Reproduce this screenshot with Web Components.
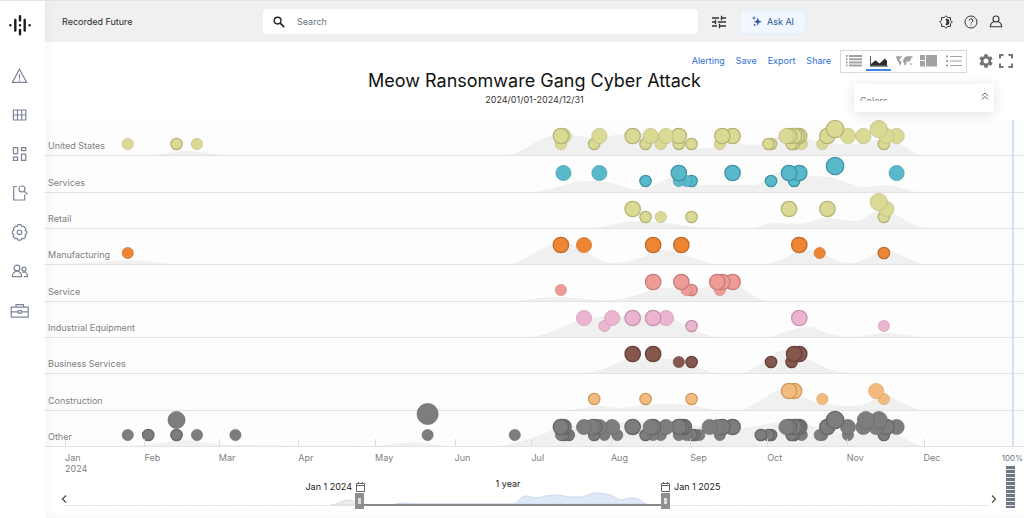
<!DOCTYPE html>
<html lang="en">
<head>
<meta charset="utf-8">
<meta name="viewport" content="width=device-width, initial-scale=1">
<title>Recorded Future – Timeline</title>
<style>
  body { margin: 0; background: #fff; font: 9px/12px Inter, "Liberation Sans", sans-serif; color: #222; }
</style>
</head>
<body>
<app-shell>
  <side-nav slot="nav"></side-nav>
  <top-bar slot="header" brand="Recorded Future"></top-bar>
  <chart-heading heading="Meow Ransomware Gang Cyber Attack" range="2024/01/01-2024/12/31">
    <view-toolbar slot="tools"></view-toolbar>
    <colors-panel slot="panel">Colors</colors-panel>
  </chart-heading>
  <event-timeline></event-timeline>
  <range-footer></range-footer>
</app-shell>

<script>
const define = (name, html, setup) => {
  const tpl = document.createElement('template');
  tpl.innerHTML = html;
  customElements.define(name, class extends HTMLElement {
    constructor() {
      super();
      this.attachShadow({ mode: 'open' }).append(tpl.content.cloneNode(true));
    }
    connectedCallback() { if (setup) setup(this, this.shadowRoot); }
  });
};

/* ---------- shell ---------- */
define('app-shell', `
<style>
  :host { display: grid; grid-template-columns: 45px minmax(0, 1fr); min-height: 100vh; }
  .nav { position: relative; z-index: 2; background: #fff; box-shadow: 0 0 16px rgba(0,0,0,.05); }
  .main { display: flex; flex-direction: column; min-width: 0; }
</style>
<div class="nav"><slot name="nav"></slot></div>
<div class="main"><slot name="header"></slot><slot></slot></div>`);

/* ---------- side navigation ---------- */
define('side-nav', `
<style>
  :host { display: block; border-top: 1px solid #e4e4ec; }
  nav { display: flex; flex-direction: column; }
  a { display: flex; align-items: center; height: 39px; padding-left: 10px; color: #7d8498; }
  a.logo { height: 48px; margin-bottom: 7px; padding-left: 8px; color: #1c1c1e; }
  svg { fill: none; stroke: currentColor; stroke-width: 1.2; }
  .logo svg { stroke-width: 2.4; stroke-linecap: round; }
</style>
<nav aria-label="Main">
  <a class="logo" href="#" aria-label="Home"><svg width="24" height="24" viewBox="0 0 24 24"><path d="M2.300 12.300h.1M21.600 12.300h.1M7.300 6.900v10.600M16.700 6.900v10.600M12 3.200v4.200M12 12.300h.1M12 17v4.200"/></svg></a>
  <a href="#" aria-label="Alerts"><svg width="19" height="18" viewBox="0 0 19 18"><path d="M9.500 2.200 16.700 15.400H2.300zM9.500 7v4.500M9.500 12.600v1.200"/></svg></a>
  <a href="#" aria-label="Tables"><svg width="19" height="18" viewBox="0 0 19 18"><path d="M3.400 4h12.400v10H3.400zM3.400 9h12.400M7.500 4v10M11.700 4v10"/></svg></a>
  <a href="#" aria-label="Dashboards"><svg width="19" height="18" viewBox="0 0 19 18"><path d="M3.400 2.700h4.200v6H3.400zM11.500 2.700h4.200v3h-4.200zM3.400 12.200h4.200v3.200H3.400zM11.500 9.200h4.200v6.200h-4.200z"/></svg></a>
  <a href="#" aria-label="Research"><svg width="19" height="18" viewBox="0 0 19 18"><path d="M7 2.500H3.700V16h11v-5.500"/><circle cx="12" cy="5" r="3"/><path d="m14.200 7.200 3.300 3.200"/></svg></a>
  <a href="#" aria-label="Settings"><svg width="19" height="18" viewBox="0 0 19 18"><path stroke-linejoin="round" d="M8 1.700h3l.8 1.800 2-.2 2 2.400-.6 1.800 1.500 1v2l-1.500 1 .5 2-2 2.200-2-.3-.8 1.700H8l-.8-1.700-2 .3-2-2.300.6-1.900-1.500-1v-2l1.500-1-.5-2 2-2.200 2 .2z"/><circle cx="9.500" cy="9.300" r="2.300"/></svg></a>
  <a href="#" aria-label="People"><svg width="19" height="18" viewBox="0 0 19 18"><circle cx="7" cy="6" r="2.900"/><path d="M2.300 14.700c0-3.500 2-5.200 4.700-5.200s4.700 1.700 4.700 5.200zM14 14.700h3.500c0-2.800-1-4.500-3.200-4.700-.8 0-1.500.2-2 .6"/><circle cx="14" cy="7.200" r="2"/></svg></a>
  <a href="#" aria-label="Cases"><svg width="20" height="18" viewBox="0 0 20 18"><path d="M1.200 6.200h17v10h-17zM6 6V3.700h7.500V6M1.200 10.800h7M11.200 10.800h7M8.200 9.500h3v2.600h-3z"/></svg></a>
</nav>`);

/* ---------- header ---------- */
define('top-bar', `
<style>
  :host { display: grid; grid-template-columns: 1fr minmax(0, 543px) 1fr; align-items: center; height: 41px;
          background: #f0f0f0; border-top: 1px solid #e4e4ec; }
  .brand { padding-left: 17px; color: #2a2a2a; }
  .mid, .search, .user { display: flex; align-items: center; }
  .search { flex: 1; height: 25px; background: #fff; border-radius: 4px; padding-left: 10px; gap: 12px; }
  input { flex: 1; min-width: 0; border: 0; outline: 0; padding: 0; font: inherit; background: none; color: #333; }
  input::placeholder { color: #6b7280; opacity: 1; }
  button { font: inherit; background: none; border: 0; padding: 0; display: flex; align-items: center; color: #333; }
  .tune { margin: 0 14px; }
  .ask { height: 24px; width: 66px; box-sizing: border-box; justify-content: center; gap: 5px; background: #f0f7ff; border: 1px solid #e2effc; border-radius: 4px; color: #2b5797; }
  .user { justify-content: flex-end; gap: 11px; padding-right: 21px; }
  svg { fill: none; stroke: currentColor; display: block; }
</style>
<div class="brand"></div>
<div class="mid">
  <label class="search">
    <svg width="12" height="12" viewBox="0 0 12 12" stroke-width="1.400"><circle cx="4.600" cy="4.600" r="3.400"/><path stroke-width="1.700" d="m7.200 7.200 4 4"/></svg>
    <input type="search" placeholder="Search" aria-label="Search">
  </label>
  <button class="tune" aria-label="Filters"><svg width="14" height="14" viewBox="0 0 14 14" stroke-width="1.300"><path d="M0 3h7M9.500 3H14M9.500.8v4.400M0 7h3.500M5.800 7H14M3.500 4.800v4.400M0 11h5M7.500 11H14M7.500 8.800v4.400"/></svg></button>
  <button class="ask"><svg width="10" height="11" viewBox="0 0 10 11" style="fill:currentColor;stroke:none"><path d="M5.800 1.500 6.800 4.500 9.800 5.700 6.800 6.800 5.800 10 4.800 6.800 1.900 5.700 4.800 4.500zM2 0l.5 1.500L4 2l-1.500.5L2 4l-.5-1.500L0 2l1.500-.5zM2.700 7.500l.4 1.100 1.100.4-1.100.4-.4 1.100-.4-1.100L1.200 9l1.100-.4z"/></svg><span>Ask AI</span></button>
</div>
<div class="user">
  <button aria-label="Theme"><svg width="14" height="14" viewBox="0 0 14 14"><path d="M7 .8 8.900 2.600h2.600v2.600L13.300 7l-1.800 1.800v2.600H8.900L7 13.200l-1.900-1.800H2.500V8.800L.7 7l1.800-1.800V2.600h2.600z"/><path fill="currentColor" d="M7 4a3 3 0 0 1 0 6 5 5 0 0 0 0-6z"/></svg></button>
  <button aria-label="Help"><svg width="14" height="14" viewBox="0 0 14 14"><circle cx="7" cy="7" r="6"/><path d="M5.200 5.600a1.800 1.800 0 1 1 2.600 1.600c-.6.300-.8.600-.8 1.300M7 9.600v1"/></svg></button>
  <button aria-label="Account"><svg width="14" height="14" viewBox="0 0 14 14" stroke-width="1.100"><circle cx="7" cy="4" r="3"/><path d="M4.800 6.500C3 7.300 1.500 9 1.300 11.800h11.400C12.500 9 11 7.300 9.200 6.500"/></svg></button>
</div>`, (el, root) => { root.querySelector('.brand').textContent = el.getAttribute('brand'); });

/* ---------- toolbar ---------- */
define('view-toolbar', `
<style>
  :host { display: flex; justify-content: flex-end; align-items: center; padding: 0 11px 0 0; }
  .links { display: flex; gap: 11px; margin: 0 9px 2px 0; }
  a { color: #2f6fd0; text-decoration: none; }
  .views { display: flex; border: 1px solid #d9d9d9; height: 21px; }
  button { background: none; border: 0; padding: 0; color: #a3a3a3; display: flex; align-items: center; justify-content: center; }
  .views button { width: 25px; height: 20px; box-sizing: border-box; padding-top: 2px; border-bottom: 2px solid transparent; }
  .views button[aria-pressed=true] { color: #2a2d33; border-bottom-color: #4285e0; }
  .tool { color: #757575; margin: 0 0 2px 12px; }
  .tool + .tool { margin-left: 6px; }
  svg { display: block; fill: currentColor; }
</style>
<div class="links"><a href="#">Alerting</a><a href="#">Save</a><a href="#">Export</a><a href="#">Share</a></div>
<div class="views">
  <button aria-label="Table"><svg width="16" height="12" viewBox="0 0 16 12"><path d="M0 0h1.500v2H0zM3 0h13v2H3zM0 3.200h1.500v2H0zM3 3.200h13v2H3zM0 6.400h1.500v2H0zM3 6.400h13v2H3zM0 9.600h1.500v2H0zM3 9.600h13v2H3z"/></svg></button>
  <button aria-label="Timeline" aria-pressed="true"><svg width="18" height="12" viewBox="0 0 18 12"><path d="M0 1h.8v9.700H18v.8H0z"/><path d="M1 10.800V9L5.500 5.200 9.500 8.500 15 3.500l2 2.500v4.800z"/></svg></button>
  <button aria-label="Map"><svg width="18" height="12" viewBox="0 0 18 12"><path d="M.3 2 3 1l2.300.6L6.500.8l.8.8-1.500 1.200-1.300 1.700.3 1 1.700.9-.3 1.900-1.400 2.700-.7-2.200L3.600 7 2.100 5.300 1.700 3.300zM8.500 4.500l.7-1.800L11 1.500l3-.6 3.500.6.3 1-1.800.8-.4 2-1.300.9-.8 1.300-.9-1.500-.9.200-.3 1.800-1 2.700-1-.5-.3-2.500-1.200-1.300zM15.200 8.300l1.600.3-.4 1.500-1.500-.3z"/></svg></button>
  <button aria-label="Treemap"><svg width="17" height="12" viewBox="0 0 17 12"><path d="M0 0h5v5H0zM0 6h5v5.500H0zM6 0h11v11.500H6z"/></svg></button>
  <button aria-label="List"><svg width="16" height="12" viewBox="0 0 16 12"><path d="M0 .5h2v2H0zM4 1h12v1H4zM0 5h2v2H0zM4 5.500h12v1H4zM0 9.500h2v2H0zM4 10h12v1H4z"/></svg></button>
</div>
<button class="tool" aria-label="Settings"><svg width="14" height="14" viewBox="2 2 20 20"><path d="M19.140 12.940c.04-.3.060-.61.060-.94 0-.32-.02-.64-.07-.94l2.030-1.580c.18-.14.230-.41.120-.61l-1.920-3.320c-.12-.22-.37-.29-.59-.22l-2.390.96c-.5-.38-1.030-.7-1.620-.94l-.36-2.540c-.04-.24-.24-.41-.48-.41h-3.840c-.24 0-.43.17-.47.410l-.36 2.540c-.59.240-1.130.57-1.620.94l-2.390-.96c-.22-.08-.47 0-.59.220L2.740 8.870c-.12.210-.08.470.12.610l2.030 1.580c-.05.300-.09.630-.09.940s.02.640.07.940l-2.030 1.580c-.18.140-.23.410-.12.610l1.920 3.320c.12.220.37.290.59.220l2.390-.96c.5.380 1.030.7 1.620.94l.36 2.540c.05.240.24.410.48.410h3.840c.24 0 .44-.17.470-.41l.36-2.540c.59-.24 1.130-.56 1.620-.94l2.390.96c.22.080.47 0 .59-.22l1.920-3.320c.12-.22.070-.47-.12-.61zM12 15.600a3.600 3.600 0 1 1 0-7.200 3.600 3.600 0 0 1 0 7.200z"/></svg></button>
<button class="tool" aria-label="Full screen"><svg width="14" height="14" viewBox="0 0 14 14"><path d="M0 0h4.500v2H2v2.500H0zM9.500 0H14v4.500h-2V2H9.500zM0 9.500h2V12h2.500v2H0zM12 9.500h2V14H9.500v-2H12z"/></svg></button>`);

define('colors-panel', `
<style>
  :host { position: absolute; top: 42px; right: 30px; width: 140px; height: 28px; box-sizing: border-box; z-index: 1;
          display: flex; justify-content: space-between; align-items: flex-start; padding: 0 5px 0 6px;
          background: #fff; border-radius: 3px; box-shadow: 0 2px 14px rgba(0,0,0,.12); color: #777; }
  .t { height: 17px; overflow: hidden; padding: 0; line-height: 34px; }
  button { border: 0; background: none; padding: 8px 0 0; color: #666; }
  svg { display: block; fill: none; stroke: currentColor; }
</style>
<div class="t"><slot></slot></div>
<button aria-label="Collapse"><svg width="8" height="8" viewBox="0 0 8 8"><path d="m.7 4 3.300-3L7.300 4M.7 7.500l3.300-3 3.300 3"/></svg></button>`);

define('chart-heading', `
<style>
  :host { display: block; position: relative; height: 78px; }
  .tools { padding-top: 8px; }
  h1 { margin: 0; text-align: center; font-weight: 400; font-size: 18px; line-height: 16px; color: #111; }
  p { margin: 5px 0 0; text-align: center; font-size: 9px; line-height: 12px; color: #333; }
</style>
<div class="tools"><slot name="tools"></slot></div>
<h1></h1><p></p><slot name="panel"></slot>`, (el, root) => {
  root.querySelector('h1').textContent = el.getAttribute('heading');
  root.querySelector('p').textContent = el.getAttribute('range');
});

/* ---------- timeline ---------- */
/* Marks are written as day-of-year; "*" marks a day with several events.
   s / m / l / x are the bubble sizes. Area points are [x, height] in a 938-unit wide year. */
const LANES = [
  { name: 'United States', fill: '#dada95', edge: '#b4b477',
    s: '24 43* 51 193 206* 226* 232 239* 244* 255 274* 275* 283* 284* 287 295 319*',
    m: '193* 194 208 221* 228 234 239* 256* 260* 281 282* 284* 285* 286* 297* 305 311 320 324', l: '300* 317',
    area: [[85,0],[122,4],[162,0],[440,0],[455,4],[475,15],[490,20],[505,21],[525,17],[535,17],[550,20],[570,22],[595,22],[615,16],[635,7],[650,8],[670,13],[685,10],[700,12],[715,19],[730,20],[745,15],[765,12],[785,11],[805,14],[820,16],[835,11],[850,2],[860,0]] },
  { name: 'Services', fill: '#58b9cb', edge: '#3f93a4',
    s: '226* 239 242 244* 275* 284*', m: '194 208 239* 260* 282* 286* 324', l: '300*',
    area: [[465,0],[485,3],[520,11],[545,9],[570,3],[585,5],[600,12],[615,18],[625,15],[635,7],[650,7],[675,7],[690,7],[700,12],[715,20],[725,20],[745,16],[765,15],[780,10],[800,5],[822,7],[840,3],[855,0]] },
  { name: 'Retail', fill: '#dada95', edge: '#b4b477',
    s: '226* 232 244* 319*', m: '221* 282* 297* 320', l: '317',
    area: [[525,0],[545,3],[570,7],[595,6],[635,1],[685,0],[710,5],[735,4],[760,10],[790,7],[815,17],[830,14],[845,5],[860,0]] },
  { name: 'Manufacturing', fill: '#ee8533', edge: '#bd6a2b',
    s: '24 294 319*', m: '193* 202 229* 240* 286*',
    area: [[-15,0],[35,2],[65,4],[95,1],[115,0],[440,0],[455,3],[475,14],[497,22],[515,16],[535,4],[550,1],[575,6],[600,14],[625,7],[645,1],[655,0],[700,0],[715,4],[740,14],[760,9],[775,2],[785,1],[800,5],[820,14],[840,7],[860,0]] },
  { name: 'Service', fill: '#ef9c98', edge: '#c77c7a',
    s: '193 242 244* 255', m: '229* 240* 254* 256* 260*',
    area: [[450,0],[475,3],[495,4],[535,1],[555,2],[575,7],[595,13],[625,12],[655,16],[670,17],[685,7],[705,0]] },
  { name: 'Industrial Equipment', fill: '#ebb4cf', edge: '#c593ad',
    s: '210 244* 319', m: '202 213 221* 229* 234 286*',
    area: [[465,0],[480,3],[510,15],[535,20],[565,21],[585,23],[605,20],[625,9],[645,1],[655,0],[703,0],[720,5],[743,10],[765,3],[785,0],[820,4],[860,0]] },
  { name: 'Business Services', fill: '#85574d', edge: '#67413a',
    s: '239 244* 275* 283*', m: '221* 229* 284* 286*',
    area: [[520,0],[540,5],[565,14],[595,14],[620,12],[640,3],[655,0],[675,0],[695,9],[710,20],[720,23],[740,15],[765,4],[785,0]] },
  { name: 'Construction', fill: '#f3bc7e', edge: '#cd9a60',
    s: '206* 226* 244* 295 319', m: '282* 284* 316',
    area: [[500,0],[535,4],[555,2],[580,5],[605,6],[635,3],[655,0],[675,0],[695,9],[715,20],[735,14],[755,7],[785,4],[800,6],[820,15],[840,6],[860,0]] },
  { name: 'Other', fill: '#7d7d7d', edge: '#666',
    s: '24 32* 43* 51 66 141 175 193 194* 195 196* 206* 210 215 226* 229 232 239 242 244* 245* 247 255 271* 274* 275* 283* 284* 287 294 295 305 319*',
    m: '193* 194* 202 205 206* 208 213 221* 228 229* 234 239* 240* 241* 251 254 256* 260* 281 282* 284* 285* 286* 297* 305 311 316 320* 324',
    l: '43 300* 312 317', x: '141',
    area: [[65,0],[90,2],[120,6],[150,2],[170,1],[305,0],[350,4],[385,0],[430,0],[450,3],[475,11],[495,18],[535,22],[585,24],[635,20],[655,15],[685,19],[725,25],[755,18],[785,12],[815,14],[835,10],[850,2],[860,0]] }
];
const SIZES = { s: [6, 11], m: [8, 19], l: [9, 26], x: [11, 32] };
const DAYS = 366;
const PLOT_H = 35;

const areaPath = (pts, base) => {
  let d = `M${pts[0][0]} ${base}`;
  for (let i = 1; i < pts.length; i++) {
    const [x0, h0] = pts[i - 1], [x1, h1] = pts[i];
    const slope = j => {
      const a = pts[Math.max(0, j - 1)], b = pts[j], c = pts[Math.min(pts.length - 1, j + 1)];
      return (b[1] - a[1]) * (c[1] - b[1]) <= 0 ? 0 : (c[1] - a[1]) / (c[0] - a[0]);
    };
    const k = (x1 - x0) / 3;
    d += `C${x0 + k} ${base - h0 - slope(i - 1) * k} ${x1 - k} ${base - h1 + slope(i) * k} ${x1} ${base - h1}`;
  }
  return d + 'z';
};

define('timeline-lane', `
<style>
  :host { display: grid; border-bottom: 1px solid #e3e3e3; }
  .plot, .label { grid-area: 1 / 1; }
  .plot { position: relative; margin: 0 21px 0 20px; display: flex; align-items: flex-end; }
  svg { display: block; width: 100%; height: 35px; overflow: visible; }
  .label { align-self: end; padding: 0 0 3px 3px; color: #808080; z-index: 1; }
</style>
<div class="plot"></div><div class="label"><slot></slot></div>`, (el, root) => {
  const lane = LANES[el.getAttribute('index')];
  let marks = '';
  for (const size of ['s', 'm', 'l', 'x']) {
    const [r, up] = SIZES[size];
    for (const m of (lane[size] || '').split(' ').filter(Boolean).reverse()) {
      const many = m.endsWith('*');
      marks += `<circle cx="${((parseInt(m) + .5) / DAYS * 100).toFixed(2)}%" cy="${PLOT_H - up}" r="${many ? r - .3 : r - .4}" fill="${lane.fill}" stroke="${lane.edge}" stroke-width="${many ? 1.3 : .6}"/>`;
    }
  }
  root.querySelector('.plot').innerHTML =
    `<svg aria-hidden="true"><svg width="100%" height="${PLOT_H}" viewBox="0 0 938 ${PLOT_H}" preserveAspectRatio="none"><path d="${areaPath(lane.area, PLOT_H)}" fill="#f0f0f0"/></svg>${marks}</svg>`;
});

define('month-axis', `
<style>
  :host { display: grid; grid-template-columns: 31fr 29fr 31fr 30fr 31fr 30fr 31fr 31fr 30fr 31fr 30fr 31fr;
          padding: 0 21px 0 20px; height: 28px; color: #808080; }
  div { position: relative; padding-top: 5px; line-height: 11px; white-space: pre-line; }
  div::before { content: ""; position: absolute; left: 0; top: -8px; height: 7px; border-left: 1px solid #dcdcdc; }
</style>`, (el, root) => {
  for (const m of 'Jan\n2024,Feb,Mar,Apr,May,Jun,Jul,Aug,Sep,Oct,Nov,Dec'.split(',')) {
    const d = document.createElement('div');
    d.textContent = m;
    root.append(d);
  }
});

define('event-timeline', `
<style>
  :host { display: flex; flex: 1; flex-direction: column; }
  .lanes { flex: 1; display: grid; grid-auto-rows: 1fr; position: relative; background: #fdfdfd; }
  .lanes::after { content: ""; position: absolute; top: 0; bottom: 0; right: 10px; width: 2px; background: #d2e1f5; }
</style>
<div class="lanes"></div><month-axis></month-axis>`, (el, root) => {
  const box = root.querySelector('.lanes');
  LANES.forEach((lane, i) => {
    const row = document.createElement('timeline-lane');
    row.setAttribute('index', i);
    row.textContent = lane.name;
    box.append(row);
  });
});

/* ---------- range footer ---------- */
define('date-range', `
<style>
  :host { display: block; position: relative; height: 35px; margin: 0 35px 0 20px; }
  .captions { display: grid; grid-template-columns: 300fr 296fr 328fr; color: #222; line-height: 14px; }
  .captions div { display: flex; align-items: center; gap: 4px; padding-top: 4px; }
  .captions .from { justify-content: flex-end; }
  .captions .len { justify-content: center; padding: 2px 10px 4px 0; }
  svg { display: block; }
  .mini { position: absolute; left: 0; bottom: 3px; width: 100%; height: 16px; }
  input { position: absolute; left: 0; bottom: 1px; width: 100%; height: 16px; margin: 0; background: none; appearance: none; pointer-events: none; }
  input::-webkit-slider-thumb { appearance: none; pointer-events: auto; width: 9px; height: 16px; border: 0; border-radius: 0;
    background: linear-gradient(#ddd, #ddd) center / 3px 6px no-repeat #8f8f8f; }
</style>
<div class="captions">
  <div class="from"><span>Jan 1 2024</span><svg width="9" height="10" viewBox="0 0 9 10" fill="none" stroke="#666"><path d="M.5 1.500h8v8h-8zM.5 3.500h8M2.500 0v2M6.500 0v2"/></svg></div>
  <div class="len">1 year</div>
  <div><svg width="9" height="10" viewBox="0 0 9 10" fill="none" stroke="#666"><path d="M.5 1.500h8v8h-8zM.5 3.500h8M2.500 0v2M6.500 0v2"/></svg><span>Jan 1 2025</span></div>
</div>
<svg class="mini" viewBox="0 0 924 16" preserveAspectRatio="none" aria-hidden="true"></svg>
<input type="range" min="0" max="1000" value="317" aria-label="Range start">
<input type="range" min="0" max="1000" value="651" aria-label="Range end">`, (el, root) => {
  let ticks = '';
  for (let x = 25; x < 920; x += 25) ticks += `M${x} 12.500v2`;
  root.querySelector('.mini').innerHTML = `
    <path d="M0 14.500h924${ticks}" fill="none" stroke="#e6e6e6"/>
    <path d="M266 14C274 13 276 9 283 9s8 4 14 5z" fill="#ececec" stroke="#ddd"/>
    <path d="${areaPath([[330,0],[340,1],[350,0],[448,0],[460,8],[472,6],[480,8],[493,9],[505,7],[515,7],[530,11],[545,9],[556,4],[565,6],[573,5],[582,0]], 13)}" fill="#dfe9f7" stroke="#cddaea"/>
    <path d="M295 14h306" stroke="#8a8a8a" stroke-width="2"/>`;
});

define('zoom-meter', `
<style>
  :host { position: absolute; right: 1px; top: -23px; display: flex; flex-direction: column; align-items: center; color: #6b7280; font-size: 8px; }
  i { display: block; width: 9px; height: 42px; margin: 2px 4px 0 0; background: repeating-linear-gradient(#6f7787 0 3px, #e4e6ea 3px 4px); }
</style>
<span>100%</span><i></i>`);

define('range-footer', `
<style>
  :host { display: block; position: relative; height: 43px; background: linear-gradient(#fff 34px, #f9f9f9); }
  button { position: absolute; top: 19px; border: 0; background: none; padding: 0; color: #555; }
  .prev { left: 16px; } .next { right: 27px; }
  svg { display: block; fill: none; stroke: currentColor; stroke-width: 1.400; }
</style>
<date-range></date-range>
<button class="prev" aria-label="Earlier"><svg width="6" height="10" viewBox="0 0 6 10"><path d="M5 1.500 1.500 5 5 8.500"/></svg></button>
<button class="next" aria-label="Later"><svg width="6" height="10" viewBox="0 0 6 10"><path d="M1 1.500 4.500 5 1 8.500"/></svg></button>
<zoom-meter></zoom-meter>`);
</script>
</body>
</html>
